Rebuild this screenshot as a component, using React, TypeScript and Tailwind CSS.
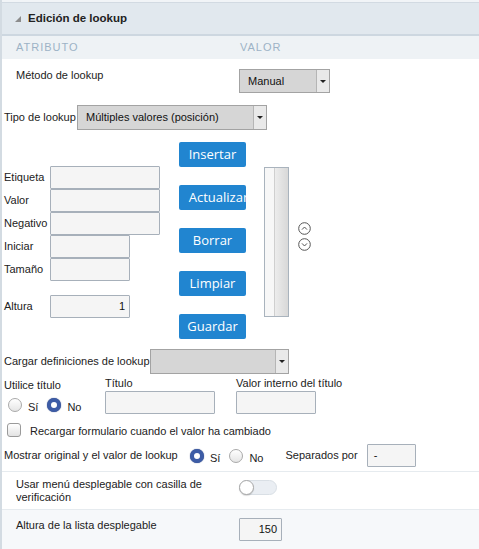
import React from 'react'

function Select({ value, className }: { value?: string; className: string }) {
  return (
    <div className={`flex border border-[#a3a3a3] bg-[#d6d6d6] ${className}`}>
      <div className="flex-1 flex items-center pl-[8px] text-[#111] truncate">{value}</div>
      <div className="w-[13px] border-l border-[#b5b5b5] bg-[#e9e9e9] flex items-center justify-center">
        <div className="w-0 h-0 border-l-[3px] border-r-[3px] border-t-[3px] border-l-transparent border-r-transparent border-t-[#222]" />
      </div>
    </div>
  )
}

function Input({ className, value }: { className: string; value?: string }) {
  return (
    <div className={`border border-[#a7b0ba] bg-[#f5f5f5] rounded-[1px] flex items-center justify-end pr-[4px] text-[#111] ${className}`}>
      {value}
    </div>
  )
}

function Radio({ checked }: { checked?: boolean }) {
  return checked ? (
    <span className="inline-block w-[14px] h-[14px] rounded-full border-[4px] border-[#3d5ca6] bg-white shadow-[0_0_1px_#1c3570]" />
  ) : (
    <span className="inline-block w-[14px] h-[14px] rounded-full border border-[#a9a9a9] bg-gradient-to-b from-white to-[#e5e5e5]" />
  )
}

function Circle({ up }: { up?: boolean }) {
  return (
    <svg width="13" height="13" viewBox="0 0 13 13" fill="none" stroke="#555" strokeWidth="1">
      <circle cx="6.5" cy="6.5" r="5.8" />
      {up ? <path d="M4 7.6 L6.5 5 L9 7.6" /> : <path d="M4 5.4 L6.5 8 L9 5.4" />}
    </svg>
  )
}

const buttons = ['Insertar', 'Actualizar', 'Borrar', 'Limpiar', 'Guardar']

export default function App() {
  return (
    <div className="w-[479px] h-[549px] overflow-hidden bg-white font-['Liberation_Sans',Arial,sans-serif] text-[11px] text-[#222] border-l-2 border-[#d3dbe2]">
      <div className="h-[3px] bg-[#f1f4f7] border-b border-[#d2dae2]" />
      <div className="h-[33px] bg-[#e1e8ee] border-b-2 border-[#cdd7e0] flex items-center pl-[13px] gap-[7px]">
        <svg width="6" height="6" viewBox="0 0 6 6">
          <polygon points="0,6 6,6 6,0" fill="#8c8c8c" />
        </svg>
        <span className="font-bold text-[11.5px] text-[#222]">Edición de lookup</span>
      </div>
      <div className="h-[23px] bg-[#eef2f5] flex items-center text-[#9db2c6] tracking-[1px] text-[11px]">
        <span className="pl-[14px] w-[238px]">ATRIBUTO</span>
        <span>VALOR</span>
      </div>

      {/* método */}
      <div className="flex pt-[10px] h-[46px]">
        <span className="pl-[14px] w-[237px] leading-[12px]">Método de lookup</span>
        <Select value="Manual" className="w-[91px] h-[24px]" />
      </div>

      <div className="flex items-center pl-[2px] h-[25px]">
        <span className="w-[73px]">Tipo de lookup</span>
        <Select value="Múltiples valores (posición)" className="w-[190px] h-[25px]" />
      </div>

      {/* campos + botones + lista */}
      <div className="flex mt-[12px] pl-[2px]">
        <div className="w-[175px] pt-[24px]">
          {[
            ['Etiqueta', 'w-[110px]'],
            ['Valor', 'w-[110px]'],
            ['Negativo', 'w-[110px]'],
            ['Iniciar', 'w-[80px]'],
            ['Tamaño', 'w-[80px]'],
          ].map(([label, w]) => (
            <div key={label} className="flex items-center h-[23px]">
              <span className="w-[46px]">{label}</span>
              <Input className={`${w} h-[23px]`} />
            </div>
          ))}
          <div className="flex items-center h-[23px] mt-[14px]">
            <span className="w-[46px]">Altura</span>
            <Input className="w-[80px] h-[23px]" value="1" />
          </div>
        </div>
        <div className="w-[67px] flex flex-col gap-[18px]">
          {buttons.map((b) => (
            <div
              key={b}
              className="h-[25px] bg-[#2185d0] rounded-[2px] text-white font-['Open_Sans',sans-serif] text-[13px] flex items-center justify-center overflow-hidden whitespace-nowrap"
            >
              <span className={b === 'Actualizar' ? 'pl-[12px]' : ''}>{b}</span>
            </div>
          ))}
        </div>
        <div className="ml-[18px] mt-[25px] w-[25px] h-[150px] border border-[#a9b3bd] flex">
          <div className="w-[9px] bg-[#f7f7f7]" />
          <div className="flex-1 border-l border-[#cfcfcf] bg-gradient-to-r from-[#ececec] to-[#d8d8d8]" />
        </div>
        <div className="ml-[9px] mt-[80px] flex flex-col gap-[3px]">
          <Circle up />
          <Circle />
        </div>
      </div>

      <div className="flex items-center pl-[2px] mt-[10px] h-[25px]">
        <span className="w-[146px]">Cargar definiciones de lookup</span>
        <Select className="w-[139px] h-[25px]" />
      </div>

      {/* título */}
      <div className="flex pl-[2px] mt-[1px] h-[39px]">
        <div className="w-[101px]">
          <div className="pt-[2px] leading-[16px]">Utilice título</div>
          <div className="flex items-center h-[16px] mt-[4px] pl-[4px]">
            <Radio />
            <span className="ml-[6px] mt-[4px] leading-[12px]">Sí</span>
            <span className="ml-[9px] flex items-center"><Radio checked /></span>
            <span className="ml-[6px] mt-[4px] leading-[12px]">No</span>
          </div>
        </div>
        <div className="w-[131px]">
          <div className="leading-[16px]">Título</div>
          <Input className="w-[110px] h-[23px]" />
        </div>
        <div>
          <div className="leading-[16px]">Valor interno del título</div>
          <Input className="w-[80px] h-[23px]" />
        </div>
      </div>

      <div className="flex items-center pl-[5px] mt-[8px] h-[16px]">
        <span className="inline-block w-[14px] h-[14px] rounded-[3px] border border-[#9a9a9a] bg-gradient-to-b from-white to-[#e3e3e3]" />
        <span className="ml-[9px] mt-[3px] leading-[13px]">Recargar formulario cuando el valor ha cambiado</span>
      </div>

      <div className="flex items-center pl-[2px] mt-[6px] h-[23px]">
        <span className="w-[186px]">Mostrar original y el valor de lookup</span>
        <Radio checked />
        <span className="ml-[6px] mt-[4px] leading-[12px]">Sí</span>
        <span className="ml-[9px] flex items-center"><Radio /></span>
        <span className="ml-[6px] mt-[4px] leading-[12px]">No</span>
        <span className="ml-[22px]">Separados por</span>
        <Input className="w-[49px] h-[23px] ml-[9px] !justify-start pl-[6px]" value="-" />
      </div>

      <div className="mt-[4px] border-t border-[#e6ebef] h-[38px] flex pt-[6px]">
        <span className="pl-[14px] w-[237px] leading-[13px]">
          Usar menú desplegable con casilla de
          <br />
          verificación
        </span>
        <div className="mt-[2px] w-[38px] h-[15px] rounded-full bg-[#eaeef3] border border-[#d9dfe5] relative">
          <div className="absolute left-[-1px] top-[-1px] w-[15px] h-[15px] rounded-full bg-white border border-[#a8a8a8] shadow-[0_1px_1px_rgba(0,0,0,0.15)]" />
        </div>
      </div>

      <div className="border-t border-[#e6ebef] bg-[#f6f8fa] h-[50px] flex pt-[8px]">
        <span className="pl-[14px] w-[237px] leading-[12px] pt-[1px]">Altura de la lista desplegable</span>
        <Input className="w-[43px] h-[23px]" value="150" />
      </div>
    </div>
  )
}
